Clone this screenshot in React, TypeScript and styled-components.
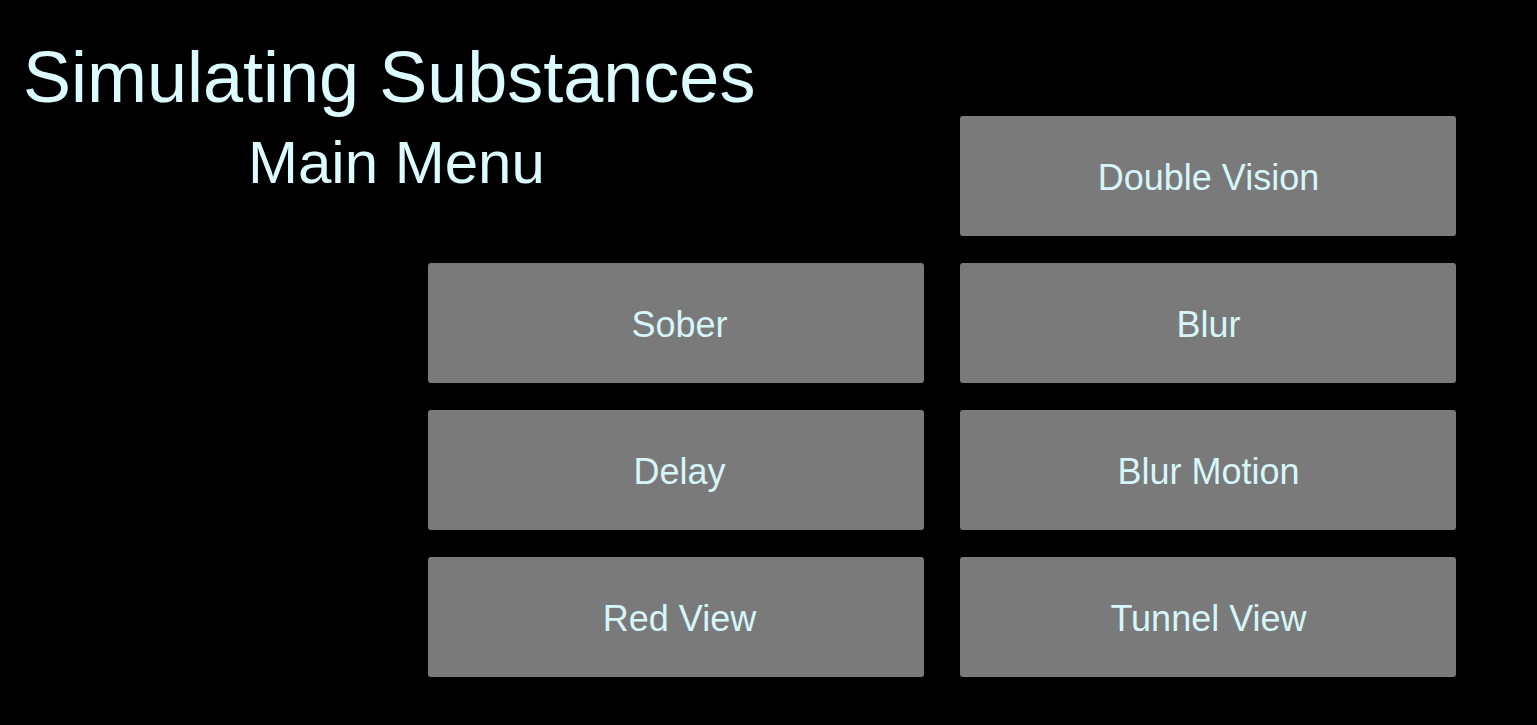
import styled, { createGlobalStyle } from 'styled-components'

const GlobalStyle = createGlobalStyle`
  html, body {
    margin: 0;
    padding: 0;
    background: #000;
  }
  body {
    font-family: "Liberation Sans", Arial, sans-serif;
  }
`

const Page = styled.div`
  min-height: 100vh;
  box-sizing: border-box;
  padding: 41px 81px 0 20px;
  background: #000;
  color: #dcfbff;
`

const Title = styled.h1`
  margin: 0 0 0 3px;
  font-size: 72px;
  font-weight: 400;
  line-height: 72px;
  white-space: nowrap;
`

const Menu = styled.div`
  margin-top: 3px;
  display: grid;
  grid-template-columns: 1fr 496px 496px;
  grid-template-rows: repeat(4, 120px);
  column-gap: 36px;
  row-gap: 27px;
`

const Subtitle = styled.h2`
  grid-column: 1 / 3;
  grid-row: 1;
  margin: 17px 0 0;
  padding-left: 228px;
  font-size: 60px;
  font-weight: 400;
  line-height: 60px;
  white-space: nowrap;
`

const MenuButton = styled.button<{ $col: number; $row: number }>`
  grid-column: ${p => p.$col};
  grid-row: ${p => p.$row};
  display: flex;
  align-items: center;
  justify-content: center;
  margin: 0;
  padding: 3px 0 0 ${p => (p.$col === 2 ? 7 : 1)}px;
  border: none;
  border-radius: 3px;
  background: #7a7a7a;
  color: #d6f6fa;
  font-family: "Liberation Sans", Arial, sans-serif;
  font-size: 36px;
  cursor: pointer;
`

const buttons = [
  { label: 'Double Vision', col: 3, row: 1 },
  { label: 'Sober', col: 2, row: 2 },
  { label: 'Blur', col: 3, row: 2 },
  { label: 'Delay', col: 2, row: 3 },
  { label: 'Blur Motion', col: 3, row: 3 },
  { label: 'Red View', col: 2, row: 4 },
  { label: 'Tunnel View', col: 3, row: 4 },
]

function App() {
  return (
    <>
      <GlobalStyle />
      <Page>
        <Title>Simulating Substances</Title>
        <Menu>
          <Subtitle>Main Menu</Subtitle>
          {buttons.map(b => (
            <MenuButton key={b.label} $col={b.col} $row={b.row}>
              {b.label}
            </MenuButton>
          ))}
        </Menu>
      </Page>
    </>
  )
}

export default App
